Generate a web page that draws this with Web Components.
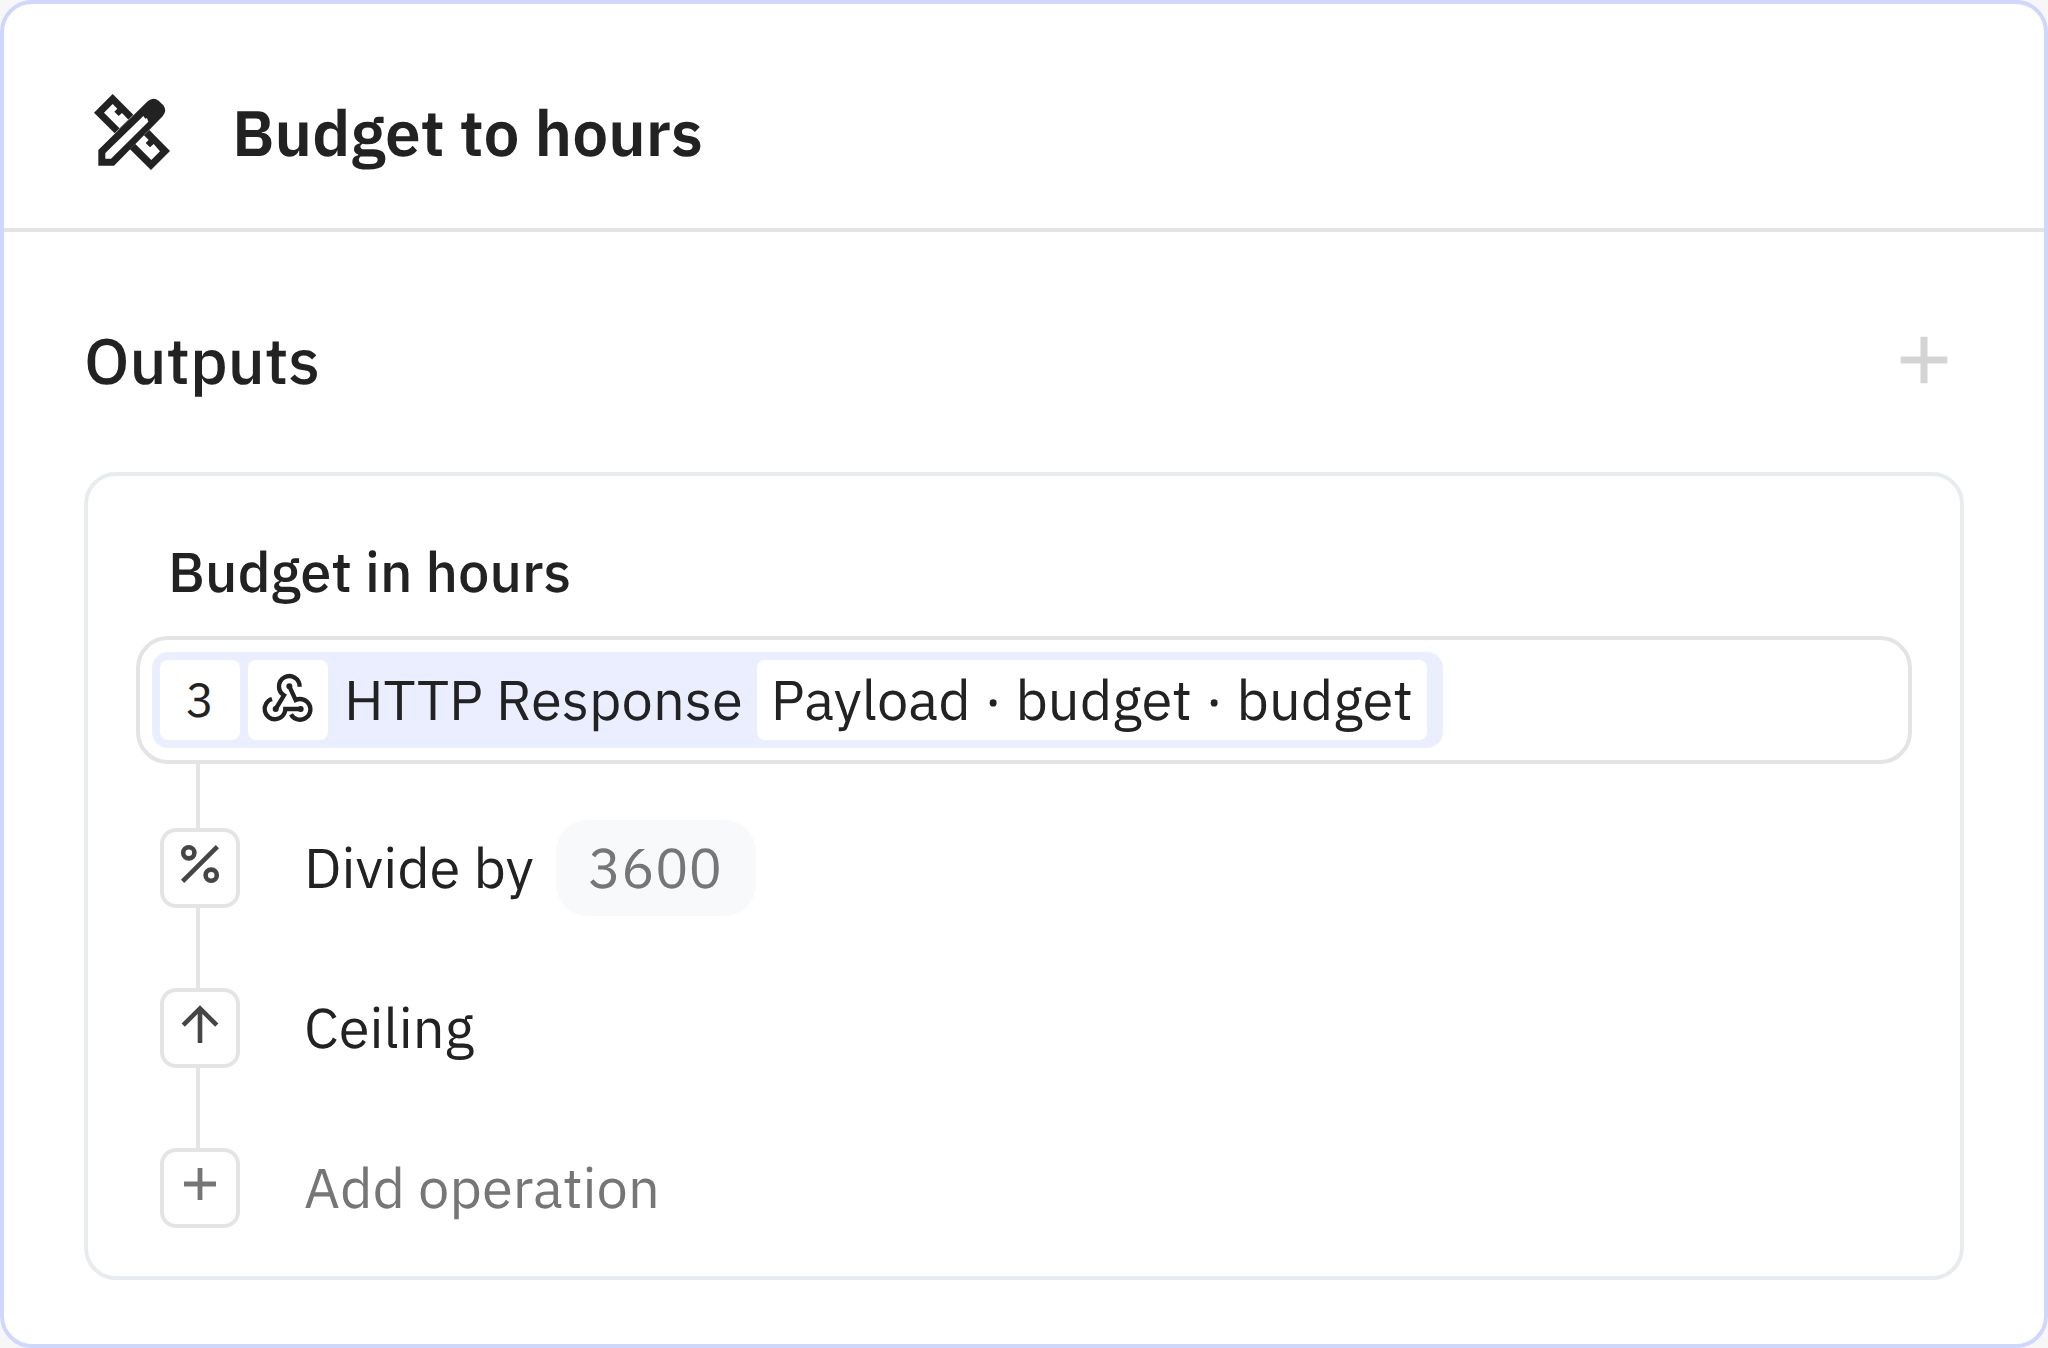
<!DOCTYPE html>
<html lang="en">
<head>
<meta charset="utf-8">
<meta name="viewport" content="width=device-width, initial-scale=1">
<title>Budget to hours</title>
<style>
    body {
        margin: 0;
        background-color: #f7f7f8;
        color: #222222;
        font-family: "IBM Plex Sans", Roboto, sans-serif;
        font-size: 56px;
        line-height: 80px;
        text-rendering: geometricPrecision;
    }
</style>
</head>
<body>
    <app-card heading="Budget to hours">
        <app-icon slot="icon" name="design" style="--size: 80px"></app-icon>
        <app-section heading="Outputs">
            <app-output label="Budget in hours">
                <app-token slot="value" step="3" source="HTTP Response">Payload · budget · budget</app-token>
                <app-operation icon="percent" label="Divide by" value="3600"></app-operation>
                <app-operation icon="arrow-up" label="Ceiling"></app-operation>
                <app-add-operation>Add operation</app-add-operation>
            </app-output>
        </app-section>
    </app-card>

<script>
const icons = {
    'design': `
        <svg viewBox="36 36 240 240" fill="currentColor" aria-hidden="true">
            <path fill-rule="evenodd" d="M98 42 42 98l62 62 56-56zM98 72l14 14-9 9 13 13 10-9 20 21-26 26-48-48z"/>
            <path fill-rule="evenodd" d="M208 150l-58 58 63 62 57-57zM192 166l14 14-9 9 13 13 11-10 19 22-26 26-48-48z"/>
            <path fill-rule="evenodd" d="M55 210 203 64q16-14 33-2l14 14q12 16-2 33L102 257H55zM76 219v17h17l112-111-4-11-5 2-6-8z"/>
        </svg>`,
    'webhook': `
        <svg viewBox="30 36 168 168" fill="none" stroke="currentColor" stroke-width="13" aria-hidden="true">
            <path d="M149 80A31 31 0 1 0 102 106L77 147"/>
            <path d="M66 117A31 31 0 1 0 106 147H152"/>
            <path d="M123 163A31 31 0 1 0 137 120L118 79"/>
            <g fill="currentColor" stroke="none">
                <circle cx="118" cy="79" r="9"/>
                <circle cx="77" cy="147" r="9"/>
                <circle cx="152" cy="147" r="9"/>
            </g>
        </svg>`,
    'percent': `
        <svg viewBox="0 0 24 24" fill="none" stroke="currentColor" stroke-width="2.3" aria-hidden="true">
            <path d="M3.3 20.7 20.7 3.3"/>
            <circle cx="6.4" cy="6.4" r="2.8"/>
            <circle cx="17.6" cy="17.6" r="2.8"/>
        </svg>`,
    'arrow-up': `
        <svg viewBox="0 0 24 24" fill="none" stroke="currentColor" stroke-width="2.3" aria-hidden="true">
            <path d="M12 21.5V4.5M3.6 12.6 12 4.2l8.4 8.4"/>
        </svg>`,
    'plus': `
        <svg viewBox="0 0 24 24" fill="none" stroke="currentColor" stroke-width="2.4" aria-hidden="true">
            <path d="M12 4v16M4 12h16"/>
        </svg>`,
};

class AppIcon extends HTMLElement {
    constructor() {
        super();
        this.attachShadow({mode: 'open'});
    }

    connectedCallback() {
        this.shadowRoot.innerHTML = `
            <style>
                :host { display: block; flex: none; width: var(--size, 48px); height: var(--size, 48px); }
                svg { display: block; width: 100%; height: 100%; }
            </style>
            ${icons[this.getAttribute('name')]}
        `;
    }
}

const templateCard = document.createElement('template');
templateCard.innerHTML = `
    <style>
        :host {
            display: block;
            box-sizing: border-box;
            min-height: 100vh;
            border: 4px solid #d0d7ff;
            border-radius: 32px;
            background-color: white;
        }

        header {
            display: flex;
            align-items: center;
            gap: 60px;
            padding: 80px 80px 48px 88px;
            border-bottom: 4px solid #e4e4e4;
        }

        h1 {
            margin: 0;
            font-size: 64px;
            font-weight: 600;
            line-height: 96px;
        }

        main {
            padding: 80px 80px 64px;
        }
    </style>
    <header>
        <slot name="icon"></slot>
        <h1></h1>
    </header>
    <main><slot></slot></main>
`;

class AppCard extends HTMLElement {
    constructor() {
        super();
        this.attachShadow({mode: 'open'});
        this.shadowRoot.appendChild(templateCard.content.cloneNode(true));
    }

    connectedCallback() {
        this.shadowRoot.querySelector('h1').textContent = this.getAttribute('heading');
    }
}

const templateSection = document.createElement('template');
templateSection.innerHTML = `
    <style>
        :host { display: block; }

        .section-head {
            display: flex;
            justify-content: space-between;
            align-items: center;
            margin-bottom: 64px;
        }

        h2 {
            margin: 0;
            font-size: 64px;
            font-weight: 500;
            line-height: 96px;
        }

        button {
            display: flex;
            padding: 5px;
            border: 0;
            background: none;
            color: #d4d4d4;
            cursor: pointer;
            --size: 70px;
        }
    </style>
    <div class="section-head">
        <h2></h2>
        <button type="button" aria-label="Add output"><app-icon name="plus"></app-icon></button>
    </div>
    <slot></slot>
`;

class AppSection extends HTMLElement {
    constructor() {
        super();
        this.attachShadow({mode: 'open'});
        this.shadowRoot.appendChild(templateSection.content.cloneNode(true));
    }

    connectedCallback() {
        this.shadowRoot.querySelector('h2').textContent = this.getAttribute('heading');
    }
}

const templateOutput = document.createElement('template');
templateOutput.innerHTML = `
    <style>
        :host {
            display: block;
            padding: 56px 48px 48px;
            border: 4px solid #e8ecef;
            border-radius: 32px;
        }

        h3 {
            margin: 0 32px 24px;
            font-size: 56px;
            font-weight: 500;
            line-height: 80px;
        }

        .field {
            display: flex;
            padding: 12px;
            border: 4px solid #e4e4e4;
            border-radius: 32px;
        }

        .operations {
            padding: 0 24px;
        }
    </style>
    <h3 id="label"></h3>
    <div class="field" role="group" aria-labelledby="label"><slot name="value"></slot></div>
    <div class="operations" role="list"><slot></slot></div>
`;

class AppOutput extends HTMLElement {
    constructor() {
        super();
        this.attachShadow({mode: 'open'});
        this.shadowRoot.appendChild(templateOutput.content.cloneNode(true));
    }

    connectedCallback() {
        this.shadowRoot.querySelector('h3').textContent = this.getAttribute('label');
    }
}

const templateToken = document.createElement('template');
templateToken.innerHTML = `
    <style>
        :host {
            display: flex;
            align-items: center;
            padding: 8px;
            border-radius: 16px;
            background-color: #ebeeff;
            white-space: nowrap;
        }

        .chip {
            display: flex;
            justify-content: center;
            align-items: center;
            min-width: 80px;
            height: 80px;
            margin-right: 8px;
            border-radius: 8px;
            background-color: white;
        }

        .step { font-size: 48px; }
        .source { padding: 0 14px 0 8px; }
        .path { padding: 0 14px; }
    </style>
    <span class="chip step"></span>
    <span class="chip"><app-icon name="webhook" style="--size: 56px"></app-icon></span>
    <span class="source"></span>
    <span class="chip path"><slot></slot></span>
`;

class AppToken extends HTMLElement {
    constructor() {
        super();
        this.attachShadow({mode: 'open'});
        this.shadowRoot.appendChild(templateToken.content.cloneNode(true));
    }

    connectedCallback() {
        this.shadowRoot.querySelector('.step').textContent = this.getAttribute('step');
        this.shadowRoot.querySelector('.source').textContent = this.getAttribute('source');
    }
}

// shared by the operation rows: connector line above a boxed icon
const stepStyles = `
    :host { display: block; }

    .row {
        display: grid;
        grid-template-columns: 80px 1fr;
        column-gap: 64px;
    }

    .line {
        width: 4px;
        height: var(--line, 80px);
        margin-left: 36px;
        background-color: #e4e4e4;
    }

    .box {
        grid-row: 2;
        display: flex;
        justify-content: center;
        box-sizing: border-box;
        width: 80px;
        height: 80px;
        padding-top: 8px;
        border: 4px solid #e4e4e4;
        border-radius: 16px;
        color: #454545;
    }

    .body {
        grid-row: 2;
        display: flex;
        align-items: center;
        gap: 22px;
        height: 80px;
    }
`;

class AppOperation extends HTMLElement {
    constructor() {
        super();
        this.attachShadow({mode: 'open'});
    }

    connectedCallback() {
        const value = this.getAttribute('value');
        const label = this.getAttribute('label');
        this.setAttribute('role', 'listitem');
        this.shadowRoot.innerHTML = `
            <style>
                ${stepStyles}
                :host(:first-of-type) { --line: 64px; }

                input {
                    box-sizing: border-box;
                    width: 200px;
                    height: 96px;
                    padding: 0 32px;
                    border: 0;
                    border-radius: 32px;
                    background-color: #f8f9fb;
                    color: #767676;
                    font: inherit;
                    text-rendering: inherit;
                }
            </style>
            <div class="row">
                <span class="line"></span>
                <span class="box"><app-icon name="${this.getAttribute('icon')}"></app-icon></span>
                <div class="body">
                    ${value
                        ? `<label for="value">${label}</label><input id="value" type="text" inputmode="numeric" value="${value}">`
                        : `<span>${label}</span>`}
                </div>
            </div>
        `;
    }
}

class AppAddOperation extends HTMLElement {
    constructor() {
        super();
        this.attachShadow({mode: 'open'});
        this.shadowRoot.innerHTML = `
            <style>
                ${stepStyles}
                button {
                    width: 100%;
                    padding: 0;
                    border: 0;
                    background: none;
                    color: #767676;
                    font: inherit;
                    text-align: left;
                    text-rendering: inherit;
                    cursor: pointer;
                }
                .box { color: inherit; }
            </style>
            <button class="row" type="button">
                <span class="line"></span>
                <span class="box"><app-icon name="plus"></app-icon></span>
                <span class="body"><slot></slot></span>
            </button>
        `;
    }
}

window.customElements.define('app-icon', AppIcon);
window.customElements.define('app-card', AppCard);
window.customElements.define('app-section', AppSection);
window.customElements.define('app-output', AppOutput);
window.customElements.define('app-token', AppToken);
window.customElements.define('app-operation', AppOperation);
window.customElements.define('app-add-operation', AppAddOperation);
</script>
</body>
</html>
